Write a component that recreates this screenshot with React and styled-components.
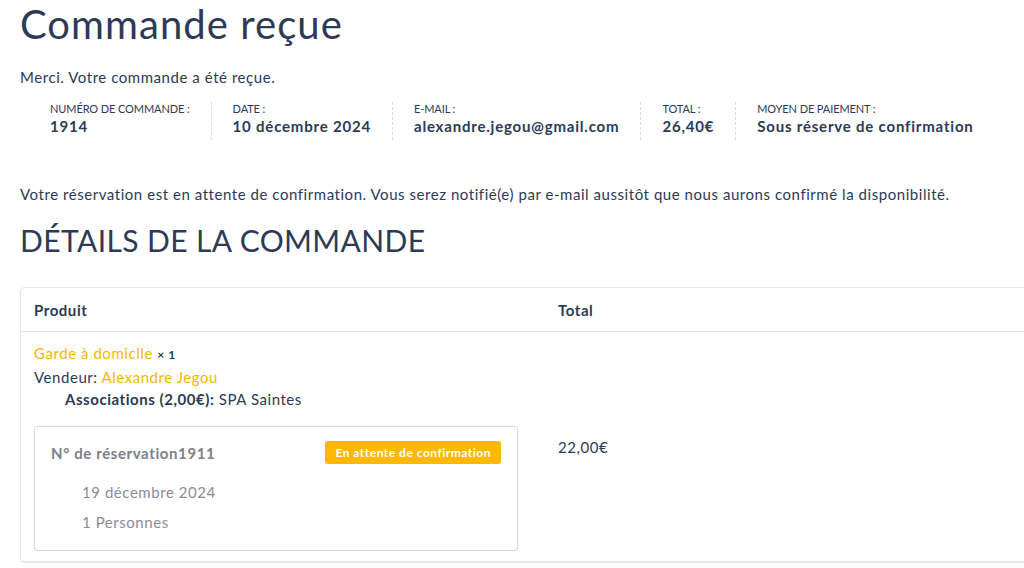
import styled, { createGlobalStyle } from 'styled-components';

const GlobalStyle = createGlobalStyle`
  html, body {
    margin: 0;
    padding: 0;
    background: #fff;
  }
  body {
    font-family: "Lato", "Open Sans", sans-serif;
    color: #2d3a55;
    font-size: 15px;
    letter-spacing: 0.55px;
  }
`;

const Page = styled.div`
  width: 1024px;
  height: 568px;
  overflow: hidden;
  padding: 0 0 0 20px;
  box-sizing: border-box;
`;

const Title = styled.h1`
  margin: 0;
  padding-top: 2px;
  font-size: 40px;
  font-weight: 400;
  line-height: 44px;
  letter-spacing: 1.05px;
  color: #2d3a55;
`;

const Notice = styled.p`
  margin: ${({top}) => top} 0 0;
  font-size: 15px;
  line-height: 22px;
  color: #2d3a55;
`;

const Overview = styled.ul`
  display: flex;
  margin: 14px 0 0;
  padding: 0 0 0 30px;
  list-style: none;
`;

const OverviewItem = styled.li`
  display: flex;
  flex-direction: column;
  padding: 0 ${({last}) => last ? '0' : '21px'} 0 ${({first}) => first ? '0' : '21px'};
  border-right: ${({last}) => last ? 'none' : '1px dashed #dcdcdc'};
  height: 38px;
`;

const Label = styled.span`
  font-size: 11px;
  line-height: 14px;
  letter-spacing: -0.1px;
  text-transform: uppercase;
  color: #2d3a55;
`;

const Value = styled.strong`
  font-size: 15px;
  line-height: 20px;
  font-weight: 700;
  letter-spacing: 0.8px;
  color: #2d3a55;
`;

const SectionTitle = styled.h2`
  margin: 17px 0 0;
  font-size: 30px;
  font-weight: 400;
  line-height: 36px;
  letter-spacing: 0.4px;
  color: #2d3a55;
  text-transform: uppercase;
`;

const Table = styled.div`
  margin-top: 29px;
  width: 1020px;
  border: 1px solid #e6e6e6;
  border-right: none;
  border-radius: 5px 0 0 5px;
  display: grid;
  grid-template-columns: 524px 1fr;
`;

const HeadCell = styled.div`
  padding: 0 13px;
  height: 43px;
  display: flex;
  align-items: center;
  font-weight: 700;
  font-size: 15px;
  border-bottom: 1px solid #e6e6e6;
`;

const Cell = styled.div`
  padding: 10px 13px 10px;
  display: flex;
  flex-direction: column;
  justify-content: ${({middle}) => middle ? 'center' : 'flex-start'};
  border-bottom: 1px solid #e6e6e6;
  font-size: 15px;
  line-height: 22px;
`;

const Link = styled.span`
  color: #f5b800;
`;

const Qty = styled.strong`
  font-size: 12px;
  font-weight: 700;
  color: #2d3a55;
`;

const Meta = styled.div`
  padding-left: 31px;
  line-height: 23px;
  strong {
    font-weight: 700;
  }
`;

const Booking = styled.div`
  margin: 15px 0 0 0;
  width: 484px;
  box-sizing: border-box;
  border: 1px solid #d9d9d9;
  border-radius: 3px;
  padding: 12px 16px 13px;
  box-shadow: 0 0 2px rgba(0, 0, 0, 0.06);
`;

const BookingHead = styled.div`
  display: flex;
  justify-content: space-between;
  align-items: center;
  height: 26px;
`;

const BookingId = styled.span`
  font-weight: 700;
  color: #7d808a;
  font-size: 15px;
  margin-top: 2px;
  letter-spacing: 0.6px;
`;

const Badge = styled.span`
  background: #ffb800;
  color: #fff;
  font-weight: 700;
  font-size: 12px;
  letter-spacing: 0.5px;
  padding: 4px 10px 3px;
  border-radius: 3px;
  line-height: 16px;
`;

const BookingDetail = styled.div`
  padding-left: 31px;
  color: #8a8d95;
  font-size: 15px;
  line-height: 30px;
  margin-top: ${({first}) => first ? '12px' : '0'};
`;

const overview = [
  { label: 'Numéro de commande :', value: '1914' },
  { label: 'Date :', value: '10 décembre 2024' },
  { label: 'E-mail :', value: 'alexandre.jegou@gmail.com' },
  { label: 'Total :', value: '26,40€' },
  { label: 'Moyen de paiement :', value: 'Sous réserve de confirmation' },
];

export default function App() {
  return (
    <Page>
      <GlobalStyle />
      <Title>Commande reçue</Title>
      <Notice top="20px">Merci. Votre commande a été reçue.</Notice>
      <Overview>
        {overview.map((item, i) => (
          <OverviewItem key={item.label} first={i === 0} last={i === overview.length - 1}>
            <Label>{item.label}</Label>
            <Value>{item.value}</Value>
          </OverviewItem>
        ))}
      </Overview>
      <Notice top="43px">
        Votre réservation est en attente de confirmation. Vous serez notifié(e) par e-mail aussitôt que nous aurons confirmé la disponibilité.
      </Notice>
      <SectionTitle>Détails de la commande</SectionTitle>
      <Table>
        <HeadCell>Produit</HeadCell>
        <HeadCell>Total</HeadCell>
        <Cell>
          <div>
            <Link>Garde à domicile</Link> <Qty>× 1</Qty>
          </div>
          <div>
            Vendeur: <Link>Alexandre Jegou</Link>
          </div>
          <Meta>
            <strong>Associations (2,00€):</strong> SPA Saintes
          </Meta>
          <Booking>
            <BookingHead>
              <BookingId>N° de réservation1911</BookingId>
              <Badge>En attente de confirmation</Badge>
            </BookingHead>
            <BookingDetail first>19 décembre 2024</BookingDetail>
            <BookingDetail>1 Personnes</BookingDetail>
          </Booking>
        </Cell>
        <Cell middle>22,00€</Cell>
      </Table>
    </Page>
  );
}
